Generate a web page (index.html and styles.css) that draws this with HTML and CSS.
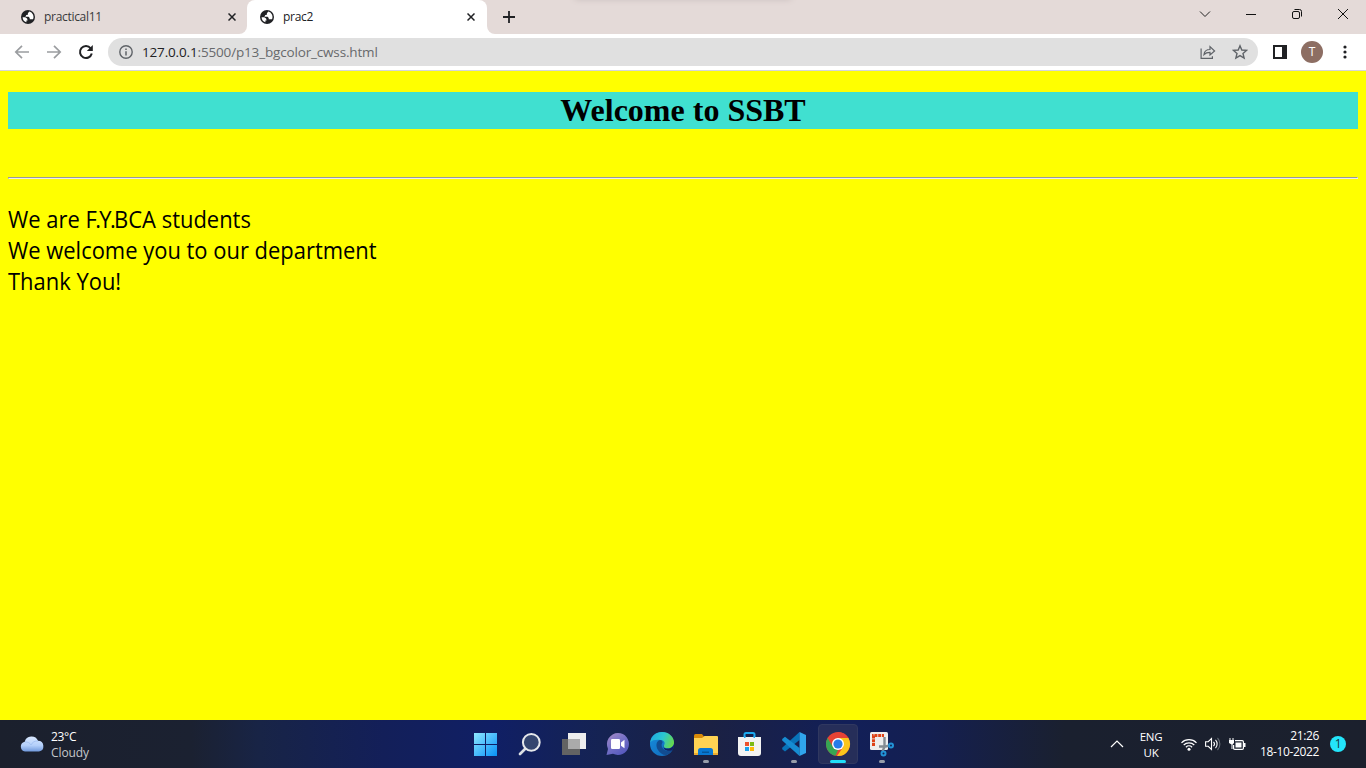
FILE: index.html
```html
<!DOCTYPE html>
<html lang="en">
<head>
<meta charset="utf-8">
<title>prac2</title>
<link rel="stylesheet" href="styles.css">
</head>
<body>
<svg class="defs" width="0" height="0">
  <symbol id="globe" viewBox="0 0 14 14"><circle cx="7" cy="7" r="7" fill="#202124"/><path d="M8.3 1.6 6.9 3.2v1.5L5.3 5.1 4.4 6.7h3.2l1.1 1.4v1.1H12A5.5 5.5 0 0 0 8.3 1.6ZM1.6 7.2h2.7l1.8 1.4.5 1.8H5.4v1.8A5.5 5.5 0 0 1 1.6 7.2Z" fill="#fff"/></symbol>
  <symbol id="close" viewBox="0 0 8 8"><path d="M.5.5l7 7M7.5.5l-7 7" stroke="#202124" stroke-width="1.5"/></symbol>
</svg>
<div class="screen">
  <header class="tabs">
    <div class="tab tab-idle"><svg class="fav"><use href="#globe"/></svg><span class="tab-title">practical11</span><svg class="tab-x"><use href="#close"/></svg></div>
    <div class="tab tab-active"><svg class="fav"><use href="#globe"/></svg><span class="tab-title">prac2</span><svg class="tab-x"><use href="#close"/></svg></div>
    <div class="new-tab"><svg width="12" height="12" viewBox="0 0 12 12"><path d="M6 0v12M0 6h12" stroke="#202124" stroke-width="1.8"/></svg></div>
    <div class="window-controls">
      <svg viewBox="0 0 46 28"><path d="M18 11.5l5 5 5-5" fill="none" stroke="#222"/></svg>
      <svg viewBox="0 0 46 28"><path d="M18 14.5h10" stroke="#111"/></svg>
      <svg viewBox="0 0 46 28"><g fill="none" stroke="#111"><rect x="18.5" y="11.5" width="7" height="7" rx="1.5"/><path d="M20.5 9.5h5a2 2 0 0 1 2 2v5"/></g></svg>
      <svg viewBox="0 0 46 28"><path d="M18 9l10 10M28 9L18 19" stroke="#111"/></svg>
    </div>
    <div class="top-shadow"></div>
  </header>
  <nav class="toolbar">
    <svg class="nav-icon" viewBox="0 0 32 28"><path d="M29 14H16M22 7.8 15.8 14 22 20.2" fill="none" stroke="#9b9da0" stroke-width="1.7"/></svg>
    <svg class="nav-icon" viewBox="0 0 32 28"><path d="M15 14h13M22 7.8 28.2 14 22 20.2" fill="none" stroke="#9b9da0" stroke-width="1.7"/></svg>
    <svg class="nav-icon" viewBox="0 0 32 28"><path d="M26.7 10.3A6 6 0 1 0 27.8 15.6" fill="none" stroke="#202124" stroke-width="2"/><path d="M28.8 7v6h-6Z" fill="#202124"/></svg>
    <div class="address">
      <svg class="info" viewBox="0 0 14 14"><circle cx="7" cy="7" r="6.2" fill="none" stroke="#5f6368" stroke-width="1.4"/><path d="M7 6.2v4.2M7 3.4V5" stroke="#5f6368" stroke-width="1.5"/></svg>
      <span class="url"><b>127.0.0.1</b>:5500/p13_bgcolor_cwss.html</span>
      <svg class="share" viewBox="0 0 16 16"><g fill="none" stroke="#5f6368" stroke-width="1.2"><path d="M1.1 4.5v9.9h11.3v-2.2"/><path d="M4 10.5c.4-3.5 2.500-5 6-5V2.600L14.600 7 10 11V8.300c-2.500 0-4.500.6-6 2.200Z"/></g></svg>
      <svg class="star" viewBox="0 0 16 16"><path d="M8 1.800l1.800 4.200 4.700.400-3.500 3.100 1.100 4.500L8 11.600l-4.100 2.400L5 9.500 1.500 6.400 6.200 6Z" fill="none" stroke="#5f6368" stroke-width="1.400"/></svg>
    </div>
    <svg class="side-panel" viewBox="0 0 14 14"><path d="M0 0h14v14H0ZM2 2v10h7V2Z" fill="#202124" fill-rule="evenodd"/></svg>
    <span class="avatar">T</span>
    <svg class="menu" viewBox="0 0 4 14"><g fill="#202124"><circle cx="2" cy="2" r="1.6"/><circle cx="2" cy="7" r="1.6"/><circle cx="2" cy="12" r="1.6"/></g></svg>
  </nav>
  <main class="page">
    <h1 class="heading">Welcome to SSBT</h1>
    <hr class="rule">
    <p class="message"><span>We are <i class="tight">F.Y.</i>BCA students</span><br><span>We welcome you to our department</span><br><span>Thank You!</span></p>
  </main>
  <footer class="taskbar">
    <div class="weather">
      <svg width="24" height="16" viewBox="0 0 24 16"><defs><linearGradient id="cloud" x2="0" y2="1"><stop stop-color="#d9e8ff"/><stop offset=".6" stop-color="#b3cffa"/><stop offset="1" stop-color="#7099dc"/></linearGradient></defs><path d="M5 15.5a5 5 0 0 1-.3-9.8 7 7 0 0 1 13.3-.9 5.400 5.400 0 0 1 1 10.700Z" fill="url(#cloud)"/><path d="M5 6c3-.2 5 1 6 3 1-2.500 4-4.500 7-4" fill="none" stroke="#9dbcf0" stroke-width=".8"/></svg>
      <div class="weather-text"><span>23°C</span><span class="dim">Cloudy</span></div>
    </div>
    <div class="apps">
      <div class="app"><svg viewBox="0 0 24 24"><defs><linearGradient id="win" gradientUnits="userSpaceOnUse" x1="1" y1="1" x2="23" y2="23"><stop stop-color="#8be5ff"/><stop offset="1" stop-color="#0a94f8"/></linearGradient></defs><path d="M0 1h11v11H0ZM12 1h11v11H12ZM0 13h11v11H0ZM12 13h11v11H12Z" fill="url(#win)"/></svg></div>
      <div class="app"><svg viewBox="0 0 24 24"><path d="M7.500 16.500 2 22" stroke="#dcdfe4" stroke-width="2.700" stroke-linecap="round"/><circle cx="13.300" cy="10.300" r="8.400" fill="#34456f" stroke="#e6e8eb" stroke-width="2"/></svg></div>
      <div class="app"><svg viewBox="0 0 24 24"><rect y="7" width="18" height="16" fill="#636363"/><path d="M6 1h18v16H6Z" fill="#ededed"/><path d="M6 7h12v10H6Z" fill="#aaa"/></svg></div>
      <div class="app"><svg viewBox="0 0 24 24"><defs><linearGradient id="chat" x2=".7" y2="1"><stop stop-color="#a98bc6"/><stop offset=".5" stop-color="#7772c6"/><stop offset="1" stop-color="#5558bd"/></linearGradient></defs><path d="M12 1a11 11 0 1 1-5 20.800L.500 23 2 17A11.200 11.200 0 0 1 12 1Z" fill="url(#chat)"/><rect x="5" y="7" width="9" height="10" rx="1.300" fill="#fff"/><path d="m15 10.500 3.500-2.700v8.500L15 13.700Z" fill="#fff"/></svg></div>
      <div class="app"><svg viewBox="0 0 24 24"><defs><linearGradient id="edge-top" x1="0" y1=".3" x2="1" y2=".6"><stop stop-color="#1fa9df"/><stop offset=".5" stop-color="#2bc6d0"/><stop offset="1" stop-color="#68d849"/></linearGradient><linearGradient id="edge-blue" x2="1" y2="1"><stop stop-color="#168ddd"/><stop offset="1" stop-color="#1167b8"/></linearGradient></defs><circle cx="12" cy="12" r="12" fill="url(#edge-blue)"/><path d="M.100 10.500C1 4 6 0 12 0c7 0 12 5 12 10.200 0 4-3 6-6 6-3.500 0-5-1.500-4-3 1.700-2.500 0-5.200-3.500-5.200C6 7.600 2 8 .100 10.500Z" fill="url(#edge-top)"/><path d="M10 8C6 9 5.500 14 8 18c2 3.300 5.500 5.500 9 4.900A12 12 0 0 0 22.500 18c-4 2-9 1-10.500-3-.700-2-.200-3 .500-4.500.300-1.500-1-2.500-2.500-2.500Z" fill="#124c91"/><path d="M13.500 13c-1.200 1.800 0 3.500 4.300 3.500 3 0 5.700-2 6.100-4.500.4 3-.6 5-1.600 6.200-5 1.800-10-.700-8.800-5.200Z" fill="#11205f"/></svg></div>
      <div class="app running"><svg viewBox="0 0 24 24"><path d="M0 3.500Q0 2 1.500 2H8l2 2.500V8H0Z" fill="#d98a08"/><path d="M0 6h8l2.500-2H23q1 0 1 1v18H0Z" fill="#ffd353"/><path d="M0 21h24v2H0Z" fill="#edab2e"/><path d="M4 23v-4.500Q4 16 6.500 16h10q2.500 0 2.500 2.500V23Z" fill="#0878d4"/><path d="M8 19.500h7V21H8Z" fill="#05569d"/></svg></div>
      <div class="app"><svg viewBox="0 0 24 24"><path d="M6.500 7V2.500Q6.500 1 8 1h7q1.500 0 1.500 1.500V7" fill="none" stroke="#1daaf0" stroke-width="2"/><path d="M0 5h23v16q0 3-3 3H3q-3 0-3-3Z" fill="#f3f3f3"/><path d="M6 4h1.500v2H6ZM15.500 4H17v2h-1.500Z" fill="#1daaf0"/><path d="M7 10h4v4H7Z" fill="#ec522c"/><path d="M12 10h4v4h-4Z" fill="#7dba16"/><path d="M7 15h4v4H7Z" fill="#19a2ec"/><path d="M12 15h4v4h-4Z" fill="#ffb90b"/></svg></div>
      <div class="app running"><svg viewBox="0 0 24 24"><path d="M17.500 0v8L3 19.500.200 17.200V15.800Z" fill="#0873b9"/><path d="M.200 7 3 4.800 17.500 16v8L.200 8.500Z" fill="#168cd2"/><path d="M17.500 0 24 3v18l-6.500 3Z" fill="#30a5ed"/></svg></div>
      <div class="app active"><svg viewBox="0 0 24 24"><circle cx="12" cy="12" r="12" fill="#e64335"/><path d="M1.600 6 7 15l5 3-2.500 5.800A12 12 0 0 1 1.600 6Z" fill="#36a653"/><path d="M22.400 6A12 12 0 0 1 11 24l6.200-9-.2-5-5-4Z" fill="#fbc51b"/><path d="M12 6h10.400A12 12 0 0 0 12 0Z" fill="#e64335"/><circle cx="12" cy="12" r="6" fill="#fff"/><circle cx="12" cy="12" r="4.600" fill="#267ce9"/></svg></div>
      <div class="app running"><svg viewBox="0 0 24 24"><rect width="18" height="18" rx="1.500" fill="#eee"/><path d="M3.500 14V3.500H14" fill="none" stroke="#dd4318" stroke-width="3" stroke-dasharray="3 .8"/><path d="M14.500 5v10l-2 4M9 14.500h6.500l4-1" fill="none" stroke="#858c92" stroke-width="2.400"/><g fill="none" stroke="#2293d6" stroke-width="2"><circle cx="21" cy="13.500" r="2"/><circle cx="13.500" cy="21.500" r="2"/></g></svg></div>
    </div>
    <div class="tray">
      <svg class="chevron" viewBox="0 0 14 10"><path d="m1 8 6-6 6 6" fill="none" stroke="#fff" stroke-width="1.200"/></svg>
      <div class="lang"><span>ENG</span><span>UK</span></div>
      <svg class="wifi" viewBox="0 0 16 13"><g fill="none" stroke="#fff" stroke-width="1.200"><path d="M.500 4.800a10.600 10.600 0 0 1 15 0M2.700 7a7.500 7.500 0 0 1 10.600 0M4.900 9.200a4.400 4.400 0 0 1 6.200 0"/></g><circle cx="8" cy="11.300" r="1.500" fill="#fff"/></svg>
      <svg class="sound" viewBox="0 0 16 14"><g fill="none" stroke="#fff" stroke-width="1.100"><path d="M.600 4.700h2.600L6.500 1.500v11L3.200 9.300H.600Z"/><path d="M8.500 4.800a3.200 3.200 0 0 1 0 4.400M10.500 2.900a6 6 0 0 1 0 8.200"/><path d="M12.500 1a8.700 8.700 0 0 1 0 12" stroke="#646b74"/></g></svg>
      <svg class="battery" viewBox="0 0 17 13"><path d="M6 2.600h7.200q1.200 0 1.200 1.200v6.400q0 1.200-1.200 1.200H5.800q-1.200 0-1.200-1.200V7" fill="none" stroke="#fff" stroke-width="1.200"/><path d="M6.500 4.500h6v5h-6Z" fill="#fff"/><path d="M15 5h1.500v4H15Z" fill="#fff"/><path d="M0 2h5v3L3.500 6.500V11h-1V6.500L0 5ZM.500 0h1v2h-1ZM3.500 0h1v2h-1Z" fill="#fff"/></svg>
      <div class="clock"><span>21:26</span><span>18-10-2022</span></div>
      <span class="badge">1</span>
    </div>
  </footer>
</div>
</body>
</html>
```
FILE: styles.css
```css
* { box-sizing: border-box; }
body { margin: 0; overflow: hidden; font-family: "Open Sans", sans-serif; }
svg { display: block; flex: none; }
.defs { position: absolute; }
.screen { width: 1366px; height: 768px; display: flex; flex-direction: column; background: #fff; }

.tabs { position: relative; height: 34px; display: flex; background: #e4dad8; overflow: hidden; }
.tab { position: relative; height: 34px; display: flex; align-items: center; font-size: 12px; color: #38393b; }
.tab-idle { width: 247px; padding-left: 21px; border-bottom-right-radius: 8px; background: #e4dad8; box-shadow: 8px 8px 0 #fff; }
.tab-active { width: 240px; padding-left: 13px; background: #fff; border-radius: 8px 8px 0 0; color: #202124; }
.fav { width: 14px; height: 14px; }
.tab-title { margin-left: 9px; letter-spacing: -.3px; line-height: 34px; }
.tab-x { width: 8px; height: 8px; margin-left: auto; margin-right: 11px; }
.tab-active .tab-x { margin-right: 12px; }
.new-tab { width: 80px; padding: 11px 0 0 16px; background: #e4dad8; border-bottom-left-radius: 8px; box-shadow: -8px 8px 0 #fff; }
.window-controls { display: flex; margin-left: auto; }
.window-controls svg { width: 46px; height: 28px; }
.top-shadow { position: absolute; left: 575px; top: -5px; width: 216px; height: 4px; box-shadow: 0 0 6px #c0b5b4; }

.toolbar { height: 37px; display: flex; align-items: center; padding: 0 0 1px; border-bottom: 1px solid #d5d5d8; }
.nav-icon { width: 32px; height: 28px; }
.address { width: 1150px; height: 28px; margin-left: 12px; padding: 0 10px 0 11px; border-radius: 14px; background: #e0e0e0; display: flex; align-items: center; }
.info { width: 14px; height: 14px; }
.url { margin-left: 9px; font-size: 13.5px; letter-spacing: -.16px; color: #67696c; white-space: nowrap; }
.url b { font-weight: 400; color: #202124; }
.share { width: 16px; height: 16px; margin-left: auto; }
.star { width: 16px; height: 16px; margin-left: 16px; }
.side-panel { width: 14px; height: 14px; margin-left: 15px; }
.avatar { width: 22px; height: 22px; margin-left: 14px; border-radius: 50%; background: #8d6e63; color: #fff; font-size: 12px; line-height: 22px; text-align: center; }
.menu { width: 4px; height: 14px; margin-left: 20px; }

.page { height: 649px; padding: 21px 8px 0; background: #ff0; }
.heading { height: 37px; margin: 0; background: #40e0d0; color: #000; font: bold 32px/37px "Liberation Serif", serif; text-align: center; }
.rule { margin: 48px 0 0; border: 1px solid; border-color: #999 #eee #eee #999; }
.message { margin: 25px 0 0; font-size: 23px; line-height: 31px; color: #000; }
.message span { display: inline-block; vertical-align: top; transform-origin: left; transform: scaleX(.954); white-space: nowrap; }
.tight { font-style: normal; letter-spacing: -1.7px; }

.taskbar { height: 48px; display: grid; grid-template-columns: 464px 440px 462px; color: #fff; font-size: 12px; letter-spacing: -.3px; background: linear-gradient(90deg, #1b202d 0, #1b2131 14%, #182446 19%, #131f59 28%, #101f65 36%, #152353 44%, #1b2143 52%, #121f58 62%, #141f51 68%, #1a202f 78%, #1b202d 100%); }
.weather { display: flex; align-items: center; padding-left: 20px; }
.weather-text { margin-left: 7px; display: flex; flex-direction: column; line-height: 16px; padding-top: 2px; }
.dim { color: #c5c7cb; letter-spacing: -.1px; }
.apps { display: flex; }
.app { width: 44px; height: 48px; display: flex; flex-direction: column; align-items: center; padding-top: 12px; }
.app svg { width: 24px; height: 24px; overflow: visible; }
.running::after { content: ""; width: 6px; height: 3px; margin-top: 4px; border-radius: 2px; background: #989eaa; }
.active { width: 40px; height: 40px; margin: 4px 2px; padding-top: 8px; background: #262e59; border: 1px solid #303860; border-radius: 4px; }
.active svg { margin-top: -1px; }
.active::after { content: ""; width: 16px; height: 3px; margin-top: 4px; border-radius: 2px; background: #20dffa; flex: none; }
.tray { display: flex; align-items: center; padding-left: 206px; }
.chevron { width: 14px; height: 10px; }
.lang { width: 30px; margin-left: 12px; padding-top: 2px; display: flex; flex-direction: column; text-align: center; line-height: 16px; font-size: 11.5px; }
.wifi { width: 16px; height: 13px; margin-left: 15px; }
.sound { width: 16px; height: 14px; margin-left: 8px; }
.battery { width: 17px; height: 13px; margin-left: 8px; }
.clock { width: 73px; display: flex; flex-direction: column; text-align: right; line-height: 16px; white-space: nowrap; letter-spacing: -.35px; }
.badge { width: 16px; height: 16px; margin-left: 11px; border-radius: 50%; background: #23e5fb; color: #16343d; text-align: center; line-height: 16px; font-size: 12px; }
```
